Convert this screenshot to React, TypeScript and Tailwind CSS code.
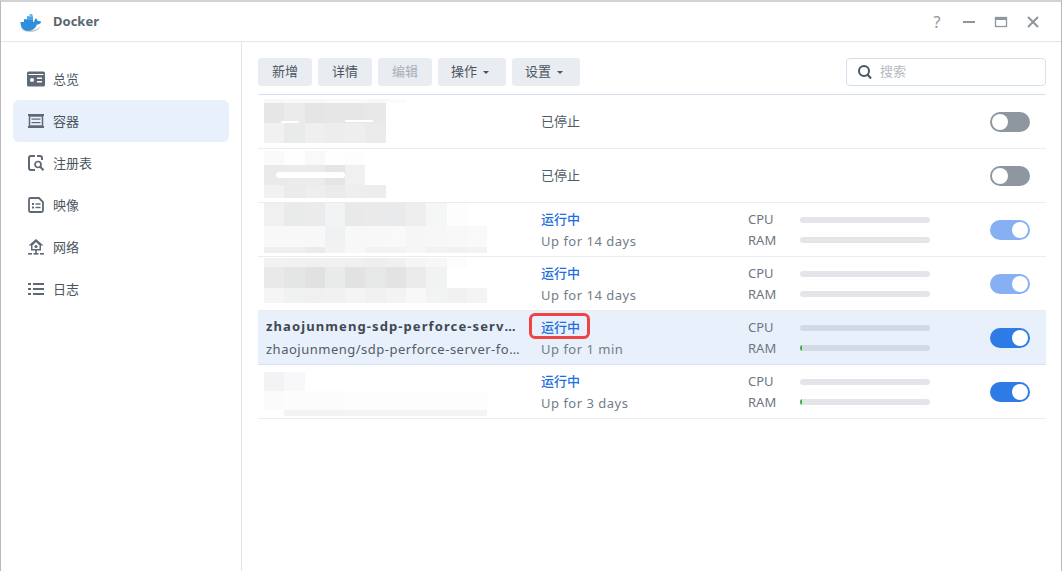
import React from "react";

const Icon = ({ children, w = 18, h = 18 }: { children: React.ReactNode; w?: number; h?: number }) => (
  <svg width={w} height={h} viewBox={`0 0 ${w} ${h}`} fill="none" className="shrink-0">
    {children}
  </svg>
);

const C = "#5f6875";

const nav = [
  {
    label: "总览",
    icon: (
      <Icon>
        <rect x="0" y="1.500" width="18" height="15" rx="1.500" fill={C} />
        <rect x="1.500" y="4" width="15" height="1" fill="#fff" />
        <circle cx="5" cy="10" r="2" fill="#fff" />
        <rect x="10" y="7.500" width="5" height="1.500" fill="#fff" />
        <rect x="10" y="11" width="5" height="1.500" fill="#fff" />
      </Icon>
    ),
  },
  {
    label: "容器",
    icon: (
      <Icon>
        <rect x="1" y="2" width="16" height="2" fill={C} />
        <rect x="1" y="14" width="16" height="2" fill={C} />
        <rect x="2.500" y="4" width="13" height="10" stroke={C} strokeWidth="1.500" />
        <rect x="4.500" y="6.500" width="9" height="1.200" fill={C} />
        <rect x="4.500" y="10" width="9" height="1.200" fill={C} />
      </Icon>
    ),
  },
  {
    label: "注册表",
    icon: (
      <Icon>
        <path d="M8 2H4a2 2 0 0 0-2 2v10a2 2 0 0 0 2 2h4M10 2h3a2 2 0 0 1 2 2v2" stroke={C} strokeWidth="2" />
        <circle cx="11" cy="10.500" r="3" stroke={C} strokeWidth="1.700" />
        <path d="M13.200 12.800l3.300 3.500" stroke={C} strokeWidth="2" />
      </Icon>
    ),
  },
  {
    label: "映像",
    icon: (
      <Icon>
        <path d="M2 3.500A1.500 1.500 0 0 1 3.500 2H12l4 4v8.500a1.500 1.500 0 0 1-1.500 1.500h-11A1.500 1.500 0 0 1 2 14.500z" stroke={C} strokeWidth="1.800" />
        <rect x="5" y="7" width="2" height="2" fill={C} />
        <rect x="8.500" y="7.300" width="5" height="1.400" fill={C} />
        <rect x="5" y="10.500" width="2" height="2" fill={C} />
        <rect x="8.500" y="10.800" width="5" height="1.400" fill={C} />
      </Icon>
    ),
  },
  {
    label: "网络",
    icon: (
      <Icon>
        <path d="M9 1L1.500 7.500H4v5h10v-5h2.500z" fill={C} />
        <path d="M9 4L5.500 7.500v3.500h7V7.500z" fill="#fff" />
        <circle cx="9" cy="8.500" r="1.600" fill={C} />
        <rect x="8.200" y="12" width="1.600" height="3" fill={C} />
        <rect x="1" y="15" width="4" height="1.600" fill={C} />
        <rect x="6.500" y="15" width="5" height="1.600" fill={C} />
        <rect x="13" y="15" width="4" height="1.600" fill={C} />
      </Icon>
    ),
  },
  {
    label: "日志",
    icon: (
      <Icon>
        <rect x="1" y="3" width="3" height="2" fill={C} />
        <rect x="6" y="3" width="11" height="2" fill={C} />
        <rect x="1" y="8" width="3" height="2" fill={C} />
        <rect x="6" y="8" width="11" height="2" fill={C} />
        <rect x="1" y="13" width="3" height="2" fill={C} />
        <rect x="6" y="13" width="11" height="2" fill={C} />
      </Icon>
    ),
  },
];

type Band = { h: number; cells: string[] };

const Mosaic = ({ top, bands, streaks = [] }: { top: number; bands: Band[]; streaks?: [number, number, number, number][] }) => (
  <div className="absolute left-[6px] flex flex-col" style={{ top }}>
    {bands.map((b, i) => (
      <div key={i} className="flex" style={{ height: b.h }}>
        {b.cells.map((c, j) => (
          <div key={j} className="w-[20.300px] shrink-0" style={{ background: c }} />
        ))}
      </div>
    ))}
    {streaks.map(([x, y, w, h], i) => (
      <div key={i} className="absolute bg-white rounded-full" style={{ left: x, top: y, width: w, height: h }} />
    ))}
  </div>
);

const m1: Band[] = [
  { h: 4, cells: ["#f8f8f8", "#f9f9f9", "#f8f8f8", "#fafafa", "#fafafa", "#f8f8f8", "#fbfbfb"] },
  { h: 20, cells: ["#e6e6e6", "#ebebea", "#e5e5e5", "#e6e6e6", "#e6e6e6", "#e8e8e8"] },
  { h: 20, cells: ["#f1f1f1", "#e9eaea", "#efefef", "#ededed", "#eeeeee", "#ebebeb"] },
];
const m2: Band[] = [
  { h: 14, cells: ["#fafafa", "#fefefe", "#f9f9f9", "#fefefe", "#fcfdfc"] },
  { h: 20, cells: ["#e9eaeb", "#ebebeb", "#ebebeb", "#e5e5e5", "#f0f0f2"] },
  { h: 13, cells: ["#f1f1f1", "#ebebeb", "#eeeeee", "#ebebeb", "#eeeeee", "#ededed"] },
];
const m3: Band[] = [
  { h: 23, cells: ["#f0f0f0", "#e9eaea", "#ebebeb", "#f2f3f4", "#e9e9e9", "#eaeaea", "#e9eaeb", "#eeeeee", "#f5f6f6", "#fdfdfd"] },
  { h: 21, cells: ["#f8f8f8", "#f8f8f8", "#f8f8f8", "#f0f1f3", "#f8f8f8", "#f8f8f8", "#f9f9f9", "#f6f6f6", "#f7f7f7", "#f8f8f8", "#f9f9f9"] },
  { h: 6, cells: ["#eeeff0", "#eeeff0", "#eaebeb", "#f3f3f3", "#f8f8f8", "#f3f3f3", "#f3f3f3", "#f6f6f6", "#f2f2f2", "#f1f1f1", "#f3f3f3"] },
];
const m4: Band[] = [
  { h: 9, cells: ["#f2f2f2", "#f1f1f1", "#f0f0f0", "#f1f1f1", "#f0f0f0", "#eeeeee", "#f0f0f0", "#f5f5f5", "#f7f7f7", "#fcfcfc"] },
  { h: 21, cells: ["#e9e9e9", "#e4e5e5", "#e1e1e1", "#e9eaea", "#e2e2e2", "#e6e7e7", "#e3e3e4", "#ebebeb", "#f1f2f2"] },
  { h: 15, cells: ["#f5f5f5", "#f0f1f1", "#f0f0f0", "#f1f1f1", "#f4f4f4", "#f1f1f1", "#f3f3f3", "#f8f8f8", "#f2f3f3", "#f1f1f1", "#f4f4f4"] },
];
const m6: Band[] = [
  { h: 19, cells: ["#f3f3f5", "#f8f8fa"] },
  { h: 19, cells: ["#fbfbfb", "#fcfcfc", "#fcfcfc", "#fcfcfc", "#fdfdfd", "#fdfdfd", "#fdfdfd", "#fdfdfd", "#fdfdfd", "#fdfdfd", "#fdfdfd"] },
  { h: 6, cells: ["#fff", "#f3f3f3", "#f3f3f3", "#f3f3f3", "#f4f4f4", "#f4f4f4", "#f4f4f4", "#f4f4f4", "#f4f4f4", "#f4f4f4", "#f4f4f4"] },
];

const Usage = ({ track, ram }: { track: string; ram?: boolean }) => (
  <div className="w-[242px] flex flex-col gap-[4px] text-[13px] leading-[16px] text-[#6d7682]">
    <div className="h-[16px] flex items-center">
      <span className="w-[52px] mb-[2px]">CPU</span>
      <div className={`w-[130px] h-[6px] rounded-full ${track}`} />
    </div>
    <div className="h-[16px] flex items-center">
      <span className="w-[52px]">RAM</span>
      <div className={`w-[130px] h-[6px] rounded-full overflow-hidden ${track}`}>
        {ram && <div className="w-[2px] h-full bg-[#36b43c]" />}
      </div>
    </div>
  </div>
);

const Toggle = ({ state }: { state: "off" | "on" | "faded" }) => {
  if (state === "off")
    return (
      <div className="w-[40px] h-[20px] rounded-full bg-[#8e979f] flex items-center justify-start pl-[2px] shrink-0">
        <div className="w-[16px] h-[16px] rounded-full bg-white" />
      </div>
    );
  return (
    <div className={`w-[40px] h-[20px] rounded-full flex items-center justify-end pr-[2px] shrink-0 ${state === "on" ? "bg-[#2e7be6]" : "bg-[#86b0f2]"}`}>
      <div className="w-[16px] h-[16px] rounded-full bg-white" />
    </div>
  );
};

const Status = ({ stopped, up, marked }: { stopped?: boolean; up?: string; marked?: boolean }) => (
  <div className="w-[207px] shrink-0 relative">
    {stopped ? (
      <div className="text-[13px] leading-[20px] text-[#505a64] mb-[2px]">已停止</div>
    ) : (
      <div className="flex flex-col gap-[2px] mt-[1px]">
        <div className="text-[13px] leading-[20px] font-medium text-[#1f6fe0]">运行中</div>
        <div className="text-[13px] leading-[20px] tracking-[0.5px] text-[#737c87]">{up}</div>
      </div>
    )}
    {marked && <div className="absolute left-[-12px] top-[-3px] w-[61px] h-[26px] border-[3px] border-[#ee4544] rounded-[6px]" />}
  </div>
);

const Row = ({
  children,
  status,
  usage,
  toggle,
  selected,
}: {
  children?: React.ReactNode;
  status: React.ReactNode;
  usage?: React.ReactNode;
  toggle: "off" | "on" | "faded";
  selected?: boolean;
}) => (
  <div className={`relative h-[54px] flex items-center border-b ${selected ? "bg-[#e8f0fb] border-[#d9e4f0]" : "border-[#e9edf2]"}`}>
    <div className="w-[283px] shrink-0 pl-[8px] pr-[20px] min-w-0">{children}</div>
    {status}
    {usage ?? <div className="w-[242px]" />}
    <Toggle state={toggle} />
  </div>
);

const Btn = ({ children, w, disabled, caret }: { children: React.ReactNode; w: string; disabled?: boolean; caret?: boolean }) => (
  <div className={`h-[28px] ${w} rounded-[3px] bg-[#e9edf2] flex items-center justify-center gap-[6px] text-[13px] ${caret ? "pr-[4px]" : ""} ${disabled ? "text-[#a8afb7]" : "text-[#4b5560]"}`}>
    {children}
    {caret && <span className="w-0 h-0 border-x-[3px] border-x-transparent border-t-[3px] border-t-[#4b5560]" />}
  </div>
);

export default function App() {
  return (
    <div
      className="w-[1062px] h-[571px] bg-white flex flex-col border-t-2 border-t-[#d2d2d2] border-x border-x-[#b9b9b9] overflow-hidden"
      style={{ fontFamily: '"Noto Sans", "Noto Sans CJK SC", sans-serif' }}
    >
      <div className="h-[40px] shrink-0 flex items-center border-b border-[#e3e6ea] pl-[18px] pr-[21px]">
        <svg width="24" height="22" viewBox="0 0 24 22" className="shrink-0">
          <path d="M1.500 15c1 4 5 6 9.500 6 5 0 9-2 11-6-3 3-7 4-11 4-4 0-7-1-9.500-4z" fill="#c9cdd1" />
          <g transform="translate(0 2)">
            <path d="M1.500 9h13.500c.2-1.500.8-3 2-3.800 1 .8 1.600 1.900 1.700 3.100 1.400-.4 2.700-.2 3.600.7-1.200 1.900-2.800 2.500-4.400 2.500C16.500 15.500 13 17.800 9 17.800c-4.800 0-7.500-3-7.500-8.800z" fill="#2e8fdb" />
            <rect x="5" y="6.200" width="9" height="3" fill="#2e8fdb" />
            <rect x="8" y="3.300" width="6" height="3" fill="#4ba3e3" />
            <rect x="10.500" y="1" width="3" height="2.500" fill="#6db6ea" />
          </g>
        </svg>
        <span className="ml-[10px] text-[13px] font-bold text-[#5b6670]">Docker</span>
        <div className="ml-auto flex items-center gap-[18px] text-[#8f969e]">
          <span className="w-[14px] text-center text-[16px] leading-none">?</span>
          <svg width="14" height="14" viewBox="0 0 14 14"><rect x="1" y="6" width="12" height="2" fill="#8f969e" /></svg>
          <svg width="14" height="14" viewBox="0 0 14 14"><rect x="1.500" y="2.500" width="11" height="9" fill="none" stroke="#8f969e" strokeWidth="1.300" /><rect x="1" y="2" width="12" height="3" fill="#8f969e" /></svg>
          <svg width="14" height="14" viewBox="0 0 14 14"><path d="M2 2l10 10M12 2L2 12" stroke="#8f969e" strokeWidth="2" /></svg>
        </div>
      </div>
      <div className="flex-1 flex min-h-0">
        <div className="w-[241px] shrink-0 border-r border-[#e3e6ea] pl-[12px] pr-[12px] pt-[16px] flex flex-col">
          {nav.map((n) => (
            <div
              key={n.label}
              className={`h-[42px] w-[216px] rounded-[6px] flex items-center gap-[8px] pl-[14px] text-[13px] text-[#4b5560] ${n.label === "容器" ? "bg-[#e8f0fb]" : ""}`}
            >
              {n.icon}
              <span className="pt-[1px]">{n.label}</span>
            </div>
          ))}
        </div>
        <div className="flex-1 pl-[16px] pr-[15px] pt-[16px] flex flex-col min-w-0">
          <div className="flex items-center gap-[6px] pb-[8px] border-b border-[#d6e0ec]">
            <Btn w="w-[54px]">新增</Btn>
            <Btn w="w-[54px]">详情</Btn>
            <Btn w="w-[54px]" disabled>编辑</Btn>
            <Btn w="w-[68px]" caret>操作</Btn>
            <Btn w="w-[68px]" caret>设置</Btn>
            <div className="ml-auto w-[200px] h-[28px] rounded-[4px] border border-[#d6e0ec] flex items-center pl-[10px] gap-[7px] text-[13px] text-[#b4bac1]">
              <svg width="16" height="16" viewBox="0 0 16 16" fill="none" className="shrink-0">
                <circle cx="7" cy="7" r="5" stroke="#4b5560" strokeWidth="2" />
                <path d="M10.500 10.500L14 14.500" stroke="#4b5560" strokeWidth="2" />
              </svg>
              <span>搜索</span>
            </div>
          </div>
          <Row status={<Status stopped />} toggle="off">
            <Mosaic top={4} bands={m1} streaks={[[17, 22, 18, 2], [81, 21, 28, 2]]} />
          </Row>
          <Row status={<Status stopped />} toggle="off">
            <Mosaic top={2} bands={m2} streaks={[[12, 21, 69, 6]]} />
          </Row>
          <Row status={<Status up="Up for 14 days" />} usage={<Usage track="bg-[#e3e5e8]" />} toggle="faded">
            <Mosaic top={0} bands={m3} />
          </Row>
          <Row status={<Status up="Up for 14 days" />} usage={<Usage track="bg-[#e3e5e8]" />} toggle="faded">
            <Mosaic top={1} bands={m4} />
          </Row>
          <Row selected status={<Status up="Up for 1 min" marked />} usage={<Usage track="bg-[#d3dae6]" ram />} toggle="on">
            <div className="text-[13px] leading-[20px] font-bold tracking-[1.100px] text-[#3f4853] truncate">zhaojunmeng-sdp-perforce-server-foundation</div>
            <div className="text-[13px] leading-[20px] mt-[3px] tracking-[0.500px] text-[#525c68] truncate">zhaojunmeng/sdp-perforce-server-foundation</div>
          </Row>
          <Row status={<Status up="Up for 3 days" />} usage={<Usage track="bg-[#e3e5e8]" ram />} toggle="on">
            <Mosaic top={7} bands={m6} />
          </Row>
        </div>
      </div>
    </div>
  );
}
